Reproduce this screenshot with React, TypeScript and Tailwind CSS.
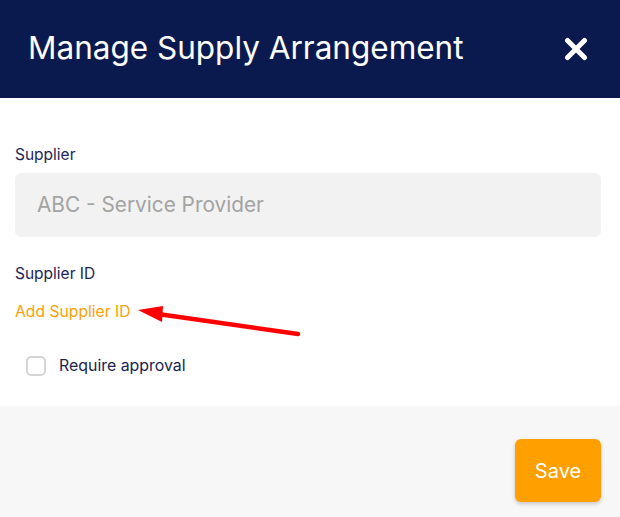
import React from 'react'

const font = { fontFamily: 'Inter, "Noto Sans", sans-serif' }

export default function App() {
  return (
    <div className="w-[620px] h-[517px] bg-white flex flex-col" style={font}>
      <header className="h-[98px] bg-[#0b1a4e] flex items-center justify-between pl-[28px] pr-[32px]">
        <h1 className="text-[31.5px] leading-[40px] -mt-[2px] text-white font-normal">Manage Supply Arrangement</h1>
        <svg width="24" height="24" viewBox="0 0 24 24" className="text-white">
          <path d="M3.5 3.5 L20.5 20.5 M20.5 3.5 L3.5 20.5" stroke="currentColor" strokeWidth="5" strokeLinecap="round" />
        </svg>
      </header>

      <main className="relative flex-1 px-[15px] pt-[47px]">
        <label className="block text-[15.5px] leading-5 text-[#1b2452]">Supplier</label>
        <div className="mt-[8px] h-[64px] w-[586px] rounded-md bg-[#f2f2f2] flex items-center px-[22px] text-[20.8px] text-[#a3a3a3]">
          ABC - Service Provider
        </div>
        <label className="block mt-[27px] text-[15.5px] leading-5 text-[#1b2452]">Supplier ID</label>
        <button type="button" className="block mt-[18px] text-[15.7px] leading-5 text-[#ffa000]">Add Supplier ID</button>
        <label className="mt-[32px] ml-[11px] flex items-center gap-[13px] text-[15.9px] text-[#1b2452]">
          <span className="h-[20px] w-[20px] rounded-[5px] border-2 border-[#d4d4d4] bg-white" />
          Require approval
        </label>
        <svg className="absolute left-0 top-0" width="620" height="308" viewBox="0 98 620 308">
          <line x1="298" y1="334" x2="158" y2="314" stroke="#ff0000" strokeWidth="4.5" strokeLinecap="round" />
          <path d="M138 310 L163 306 L162 322 Z" fill="#ff0000" />
        </svg>
      </main>

      <footer className="h-[111px] bg-[#f7f7f7] flex justify-end items-start pt-[33px] pr-[19px]">
        <button type="button" className="h-[63px] w-[86px] rounded-md bg-[#ffa000] text-white text-[20px] shadow-[0_2px_4px_rgba(0,0,0,0.2)]">
          Save
        </button>
      </footer>
    </div>
  )
}
